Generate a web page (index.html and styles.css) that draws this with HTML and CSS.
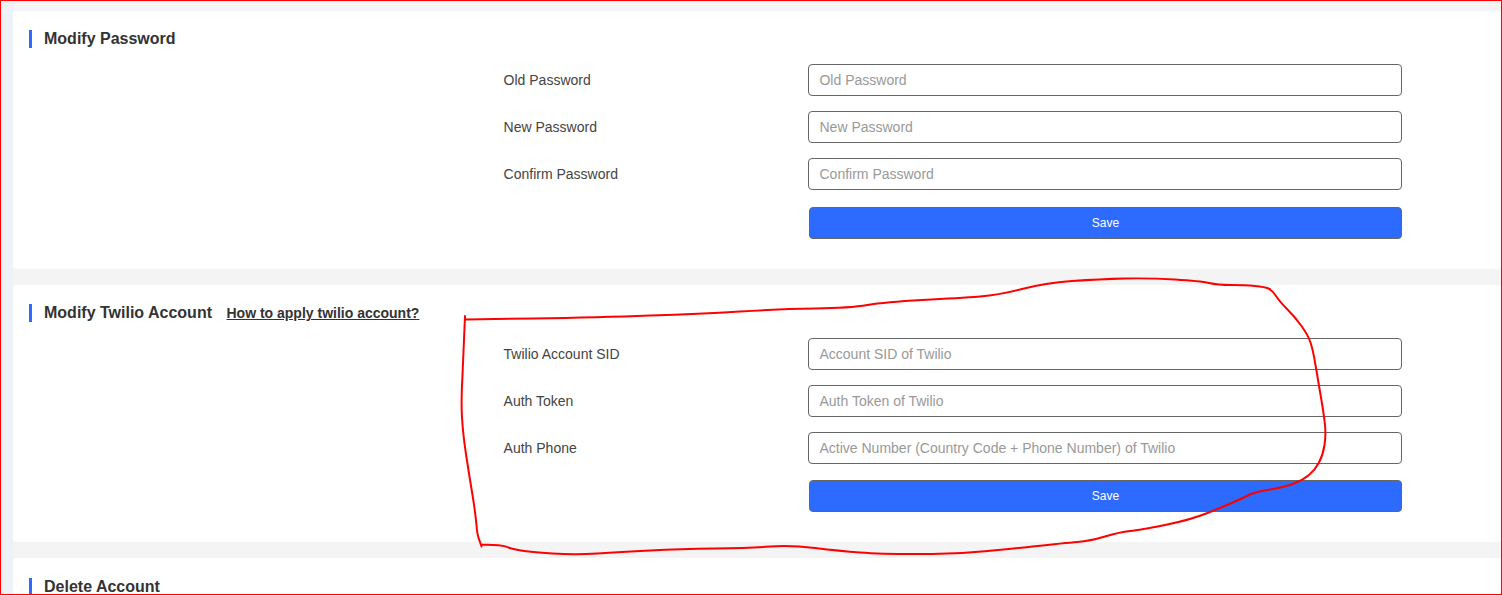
FILE: index.html
```html
<!DOCTYPE html>
<html lang="en">
<head>
<meta charset="utf-8">
<title>Account Settings</title>
<link rel="stylesheet" href="styles.css">
</head>
<body>
<div class="frame">
  <main class="main">
    <section class="card">
      <header class="card-head">
        <h2 class="card-title">Modify Password</h2>
      </header>
      <form class="form">
        <div class="row"><label class="label">Old Password</label><input class="input" type="password" placeholder="Old Password"></div>
        <div class="row"><label class="label">New Password</label><input class="input" type="password" placeholder="New Password"></div>
        <div class="row"><label class="label">Confirm Password</label><input class="input" type="password" placeholder="Confirm Password"></div>
        <div class="row row-action"><span class="label"></span><button class="save" type="button">Save</button></div>
      </form>
    </section>
    <section class="card">
      <header class="card-head">
        <h2 class="card-title">Modify Twilio Account</h2>
        <a class="help" href="#">How to apply twilio account?</a>
      </header>
      <form class="form">
        <div class="row"><label class="label">Twilio Account SID</label><input class="input" type="text" placeholder="Account SID of Twilio"></div>
        <div class="row"><label class="label">Auth Token</label><input class="input" type="text" placeholder="Auth Token of Twilio"></div>
        <div class="row"><label class="label">Auth Phone</label><input class="input" type="text" placeholder="Active Number (Country Code + Phone Number) of Twilio"></div>
        <div class="row row-action"><span class="label"></span><button class="save" type="button">Save</button></div>
      </form>
    </section>
    <section class="card">
      <header class="card-head">
        <h2 class="card-title">Delete Account</h2>
      </header>
    </section>
  </main>
</div>
<svg class="scribble" width="1502" height="595" viewBox="0 0 1502 595" aria-hidden="true">
  <path d="M466 319.5 L533 318.5 Q600 317.5 650 315.5 Q700 314 740 311.5 Q780 309 815 308.5 Q850 308 867.5 305 Q885 302 922 300 Q960 298 980 296.5 Q1000 295 1022 289 Q1045 283 1072 281 Q1100 279 1125 278.5 Q1150 278 1175 279.5 Q1200 281 1209 283 Q1218 285 1231 285 Q1245 285 1255 286 Q1265 287 1268.5 288.5 Q1272 290 1276 296 Q1280 302 1287.5 309.5 Q1295 317 1301.5 326 Q1308 335 1310.5 342.5 Q1313 350 1315.5 365 Q1318 380 1321 397.5 Q1324 415 1325 425 Q1326 435 1324.5 445 Q1323 455 1319 462.5 Q1315 470 1309 475 Q1303 480 1294 483.5 Q1285 487 1270 489.5 Q1255 492 1250 494.5 Q1245 497 1235 501.5 Q1225 506 1207.5 513 Q1190 520 1165 525 Q1140 530 1130 531 Q1120 532 1105 536.5 Q1090 541 1077.5 542 Q1065 543 1032.5 546.5 Q1000 550 975 552 Q950 554 915 554 Q880 554 860 552.5 Q840 551 815 548 Q790 545 770 546.5 Q750 548 715 548.5 Q680 549 650 550.5 Q620 552 597.5 553.5 Q575 555 552.5 553.5 Q530 552 521 550.5 Q512 549 508.5 547.5 Q505 545.5 493 545 L481 544.5 M481.5 546.5 L480 542 Q477 535 476.5 525 Q475 510 472.5 495 Q470 480 466.5 457.5 Q463 435 462 417.5 Q461 400 462.5 375 Q463.5 350 465 316"/>
</svg>
</body>
</html>
```
FILE: styles.css
```css
* { box-sizing: border-box; }
html, body { margin: 0; padding: 0; height: 595px; overflow: hidden; }
body { position: relative; font-family: "Liberation Sans", Arial, sans-serif; color: #333; background: #fff; }
.frame { height: 595px; border: 1px solid #f00; background: #eef2f6; padding-left: 12px; overflow: hidden; }
.main { display: flex; flex-direction: column; gap: 16px; min-height: 100%; padding-top: 10px; background: #f4f4f4; }
.card { flex: none; background: #fff; border-radius: 4px; padding: 19.3px 0 30px 16px; }
.card-head { display: flex; align-items: center; gap: 14.5px; height: 18px; margin-bottom: 15.7px; border-left: 3px solid #2d6bff; padding-left: 12px; }
.card-title { margin: 0; font-size: 16px; line-height: 18px; font-weight: 700; color: #333; }
.help { font-size: 14px; font-weight: 700; color: #333; text-decoration: underline; }
.form { display: flex; flex-direction: column; gap: 15px; padding-left: 474.6px; }
.row { display: flex; align-items: center; height: 32px; }
.row-action { margin-top: 1.65px; }
.label { flex: none; width: 304.4px; font-size: 14px; color: #444; }
.input { flex: none; width: 594px; height: 32px; padding: 0 10.5px; border: 1px solid #666; border-radius: 4px; background: #fff; font: 14px "Liberation Sans", Arial, sans-serif; color: #333; outline: none; }
.input::placeholder { color: #999; opacity: 1; }
.save { flex: none; width: 593px; height: 32px; margin-left: 1px; border: 1px solid #666; border-radius: 4px; background: #2d6bff; color: #fff; font: 12px "Liberation Sans", Arial, sans-serif; }
.scribble { position: absolute; left: 0; top: 0; pointer-events: none; }
.scribble path { fill: none; stroke: #f00; stroke-width: 2; stroke-linecap: round; stroke-linejoin: round; }
```
